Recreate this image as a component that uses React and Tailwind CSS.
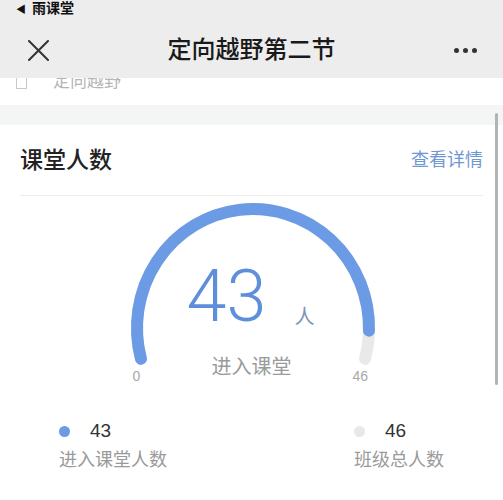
import React from "react";

const FONT = { fontFamily: '"Liberation Sans", "Noto Sans CJK SC", sans-serif' };

// gauge geometry (svg coords)
const CX = 141;
const CY = 128;
const RX = 116;
const RY = 119;
const START = 165;
const SPAN = 210;

function pt(deg) {
  const a = (deg * Math.PI) / 180;
  return [CX + RX * Math.cos(a), CY + RY * Math.sin(a)];
}

function arc(from, to) {
  const [x0, y0] = pt(from);
  const [x1, y1] = pt(to);
  const large = to - from > 180 ? 1 : 0;
  return `M ${x0.toFixed(2)} ${y0.toFixed(2)} A ${RX} ${RY} 0 ${large} 1 ${x1.toFixed(2)} ${y1.toFixed(2)}`;
}

function Gauge({ value, total }) {
  const end = START + (SPAN * value) / total;
  return (
    <div className="relative mx-auto w-[280px] h-[190px]">
      <svg width="280" height="190" className="block">
        <path d={arc(START, START + SPAN)} fill="none" stroke="#e9e9e9" strokeWidth="12" strokeLinecap="round" />
        <path d={arc(START, end)} fill="none" stroke="#6b9be4" strokeWidth="12" strokeLinecap="round" />
      </svg>
      <div
        className="absolute left-[75px] top-[61px] text-[72px] leading-[72px] font-light text-[#5f8fda]"
        style={{ fontFamily: "Roboto, sans-serif" }}
      >
        {value}
      </div>
      <div className="absolute left-[183px] top-[105px] text-[20px] leading-[24px] text-[#7f93b6]">人</div>
      <div className="absolute inset-x-0 top-[155px] text-center text-[20px] leading-[24px] text-[#9a9a9a]">进入课堂</div>
      <div className="absolute left-[21px] top-[168px] text-[14px] leading-[16px] text-[#a8a8a8]">0</div>
      <div className="absolute left-[241px] top-[168px] text-[14px] leading-[16px] text-[#a8a8a8]">{total}</div>
    </div>
  );
}

function Legend({ color, value, label }) {
  return (
    <div className="flex flex-col">
      <div className="flex items-center h-[24px]">
        <span className="w-[11px] h-[11px] rounded-full" style={{ background: color }} />
        <span className="ml-[20px] text-[19px] text-[#333]">{value}</span>
      </div>
      <div className="mt-[5px] text-[18px] leading-[24px] text-[#9a9a9a]">{label}</div>
    </div>
  );
}

export default function App() {
  const entered = 43;
  const total = 46;

  return (
    <div className="relative w-[503px] h-[500px] overflow-hidden bg-white" style={FONT}>
      {/* status bar */}
      <div className="h-[22px] bg-[#ededed] pl-[16px] flex items-start">
        <span className="text-[14px] leading-[16px] font-semibold text-[#111]">
          <span className="text-[10px] mr-[6px]">◀</span>雨课堂
        </span>
      </div>

      {/* nav bar */}
      <div className="h-[56px] bg-[#ededed] flex items-center pl-[28px] pr-[26px]">
        <svg width="21" height="21" viewBox="0 0 21 21">
          <path d="M1 1 L20 20 M20 1 L1 20" stroke="#333" strokeWidth="2" strokeLinecap="round" />
        </svg>
        <div className="flex-1 text-center text-[24px] font-medium text-[#1a1a1a]">定向越野第二节</div>
        <div className="flex gap-[4px]">
          <span className="w-[5px] h-[5px] rounded-full bg-[#333]" />
          <span className="w-[5px] h-[5px] rounded-full bg-[#333]" />
          <span className="w-[5px] h-[5px] rounded-full bg-[#333]" />
        </div>
      </div>

      {/* partly scrolled-away row */}
      <div className="h-[27px] bg-white overflow-hidden">
        <div className="-mt-[8px] flex items-center pl-[16px] h-[24px]">
          <span className="w-[11px] h-[13px] border border-[#c8c8c8]" />
          <span className="ml-[26px] text-[17px] text-[#b5b5b5]">定向越野</span>
        </div>
      </div>
      <div className="h-[20px] bg-[#f4f5f5]" />

      {/* card */}
      <div className="bg-white px-[20px]">
        <div className="h-[71px] flex items-center justify-between border-b border-[#eeeeee]">
          <span className="text-[23px] font-medium text-[#222]">课堂人数</span>
          <span className="text-[18px] text-[#6e97d3]">查看详情</span>
        </div>
        <div className="pt-[4px]">
          <Gauge value={entered} total={total} />
        </div>
        <div className="mt-[29px] flex justify-between px-[39px]">
          <Legend color="#6b9be4" value={entered} label="进入课堂人数" />
          <Legend color="#e8e8e8" value={total} label="班级总人数" />
        </div>
      </div>

      {/* scrollbar */}
      <div className="absolute right-[5px] top-[113px] w-[3px] h-[272px] rounded-full bg-[#b3b3b3]" />
    </div>
  );
}
